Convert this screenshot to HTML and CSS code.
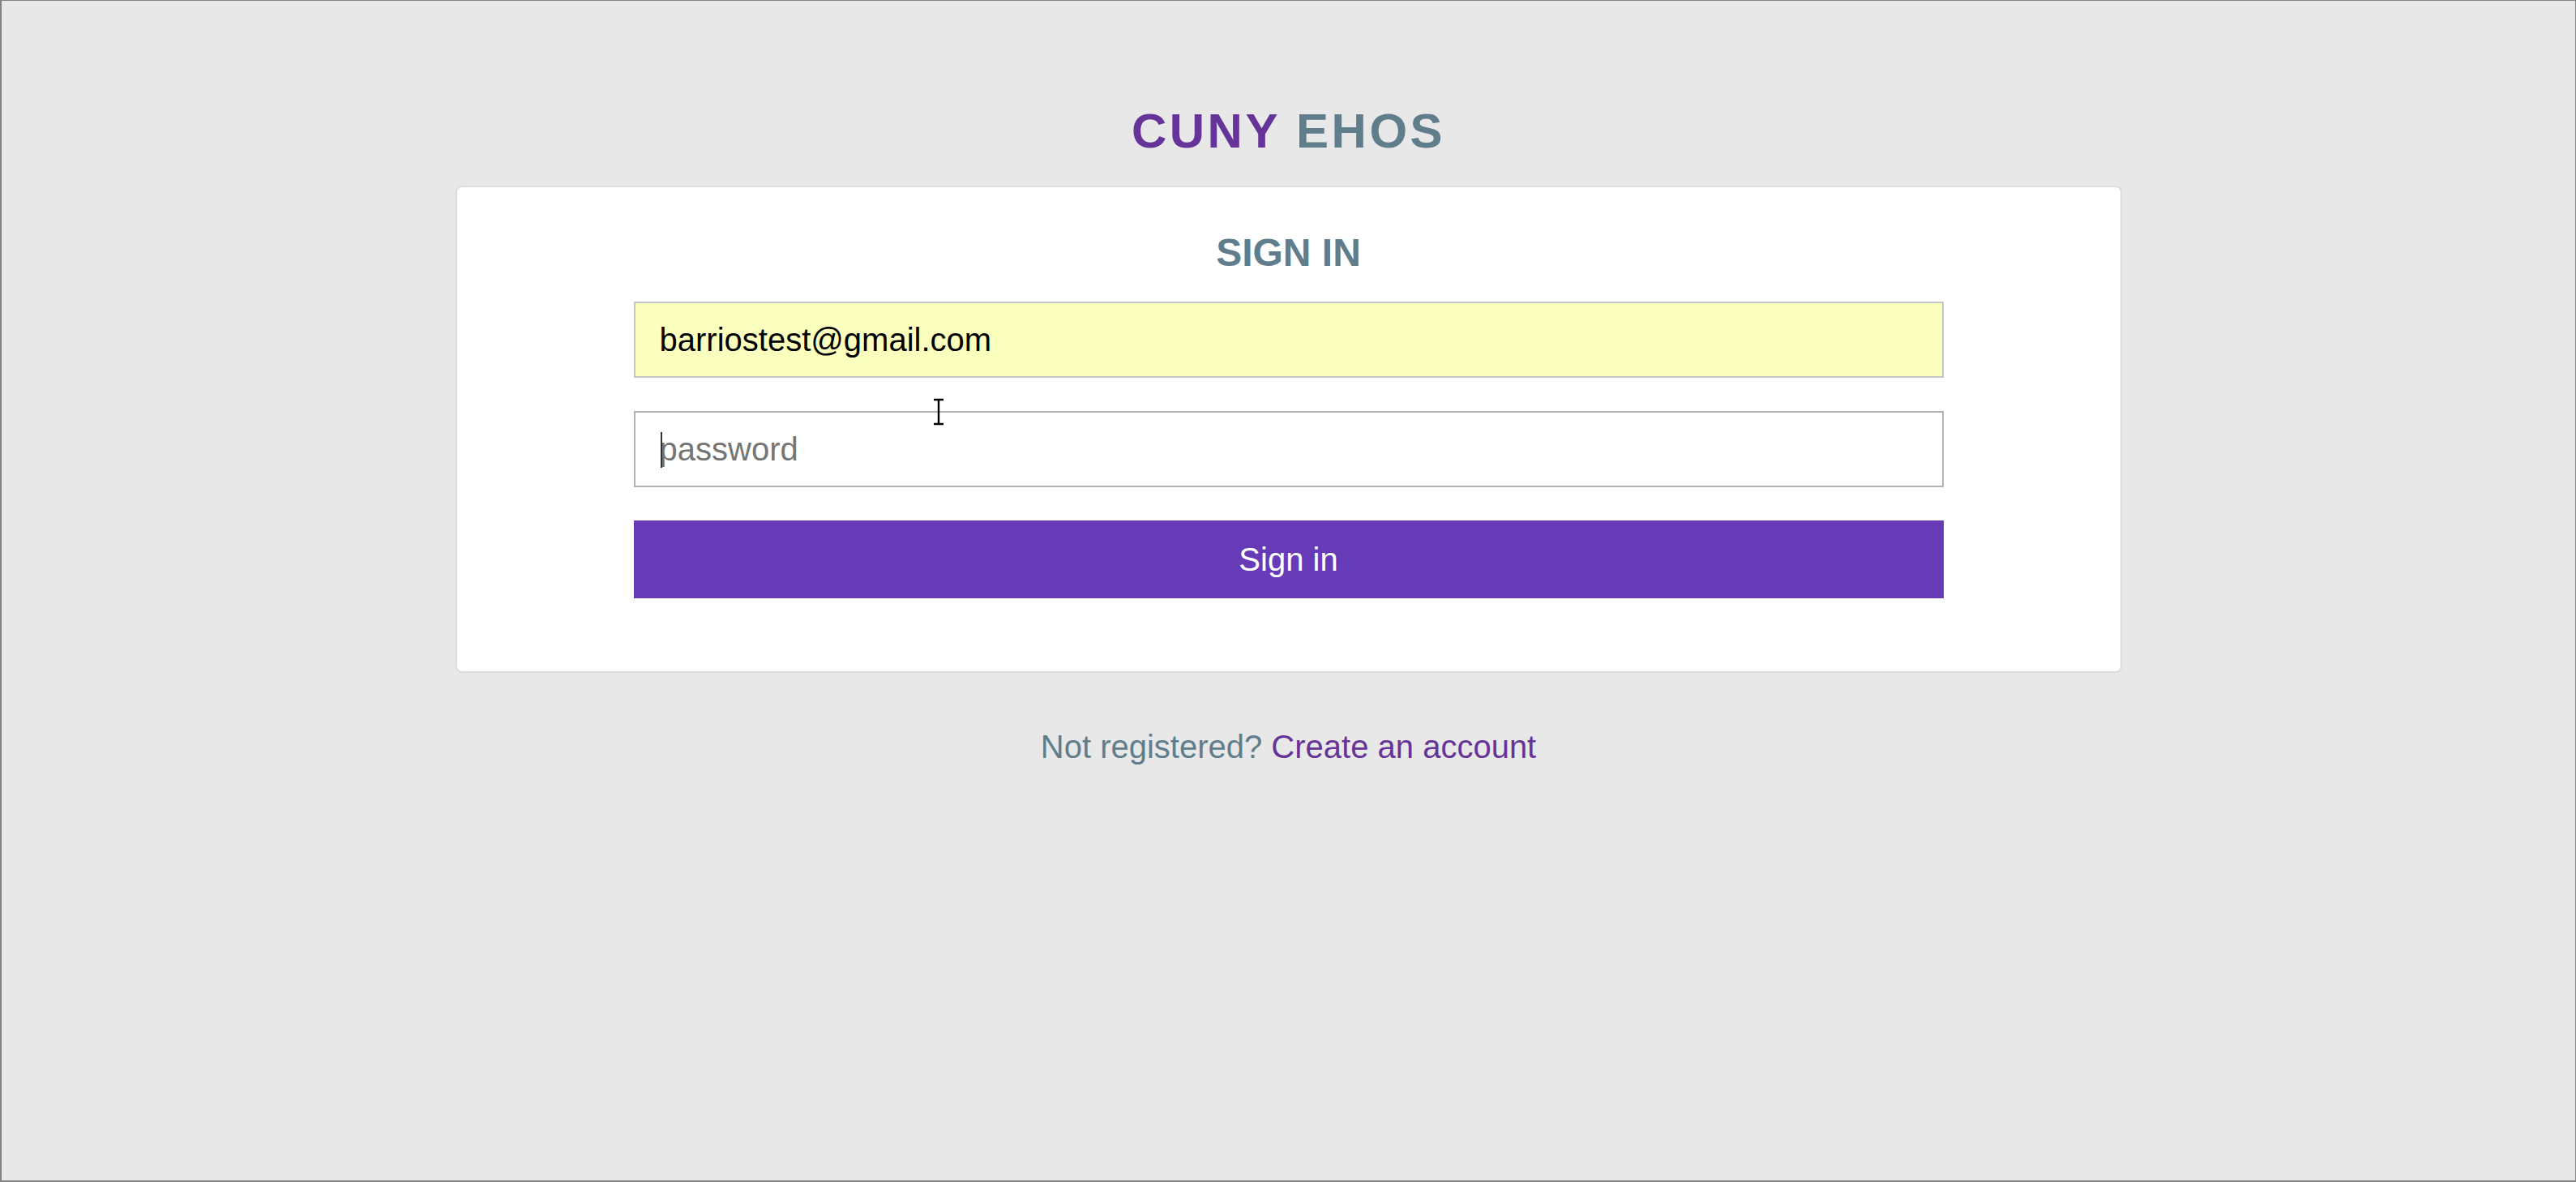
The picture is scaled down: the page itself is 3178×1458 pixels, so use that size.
FILE: index.html
```html
<!DOCTYPE html>
<html lang="en">
<head>
<meta charset="utf-8">
<title>CUNY EHOS - Sign in</title>
<link rel="stylesheet" href="styles.css">
</head>
<body>
<main class="page">
  <h1 class="brand"><span class="brand-cuny">CUNY</span> <span class="brand-ehos">EHOS</span></h1>
  <section class="card">
    <h2 class="card-title">SIGN IN</h2>
    <form class="form">
      <input class="field field-autofill" type="email" value="barriostest@gmail.com">
      <div class="field-wrap">
        <input class="field" type="password" placeholder="password">
        <span class="caret"></span>
      </div>
      <button class="submit" type="button">Sign in</button>
      <svg class="ibeam" width="16" height="34" viewBox="0 0 16 34" aria-hidden="true">
        <path d="M2 2h12M2 32h12M8 2v30" stroke="#000" stroke-width="2.4" fill="none"/>
      </svg>
    </form>
  </section>
  <p class="register">Not registered? <a class="register-link" href="#">Create an account</a></p>
</main>
</body>
</html>
```

FILE: styles.css
```css
* {
  box-sizing: border-box;
}

html, body {
  margin: 0;
  padding: 0;
}

body {
  min-height: 100vh;
  background: #e8e8e8;
  border-style: solid;
  border-color: #838383;
  border-width: 1px 1px 2px 2px;
  font-family: "Liberation Sans", Arial, sans-serif;
}

.page {
  padding-top: 126px;
}

.brand {
  margin: 0;
  font-size: 60px;
  line-height: 69px;
  font-weight: bold;
  letter-spacing: 3.5px;
  text-align: center;
}

.brand-cuny {
  color: #663399;
}

.brand-ehos {
  color: #607d8b;
}

.card {
  width: 2056px;
  margin: 33px auto 0;
  background: #ffffff;
  border: 2px solid #dddddd;
  border-radius: 8px;
  padding: 53px 0 90px;
}

.card-title {
  margin: 0 0 33px;
  font-size: 48px;
  line-height: 55px;
  font-weight: bold;
  color: #607d8b;
  text-align: center;
}

.form {
  position: relative;
  width: 1616px;
  margin: 0 auto;
  display: flex;
  flex-direction: column;
  gap: 41px;
}

.field-wrap {
  position: relative;
}

.field {
  display: block;
  width: 100%;
  height: 94px;
  margin: 0;
  padding: 0 30px;
  border: 2px solid #b3b3b3;
  border-radius: 0;
  background: #ffffff;
  font-family: "Liberation Sans", Arial, sans-serif;
  font-size: 40px;
  color: #000000;
  outline: none;
}

.field::placeholder {
  color: #757575;
  opacity: 1;
}

.field-autofill {
  background: #faffbd;
  border-color: #c4c6c8;
}

.caret {
  position: absolute;
  left: 33px;
  top: 26px;
  width: 2px;
  height: 44px;
  background: #333333;
}

.submit {
  display: block;
  width: 100%;
  height: 96px;
  margin: 0;
  border: none;
  border-radius: 0;
  background: #673ab7;
  color: #ffffff;
  font-family: "Liberation Sans", Arial, sans-serif;
  font-size: 40px;
  cursor: pointer;
}

.ibeam {
  position: absolute;
  left: 368px;
  top: 119px;
}

.register {
  margin: 68px 0 0;
  font-size: 40px;
  line-height: 46px;
  color: #607d8b;
  text-align: center;
}

.register-link {
  color: #663399;
  text-decoration: none;
}
```
